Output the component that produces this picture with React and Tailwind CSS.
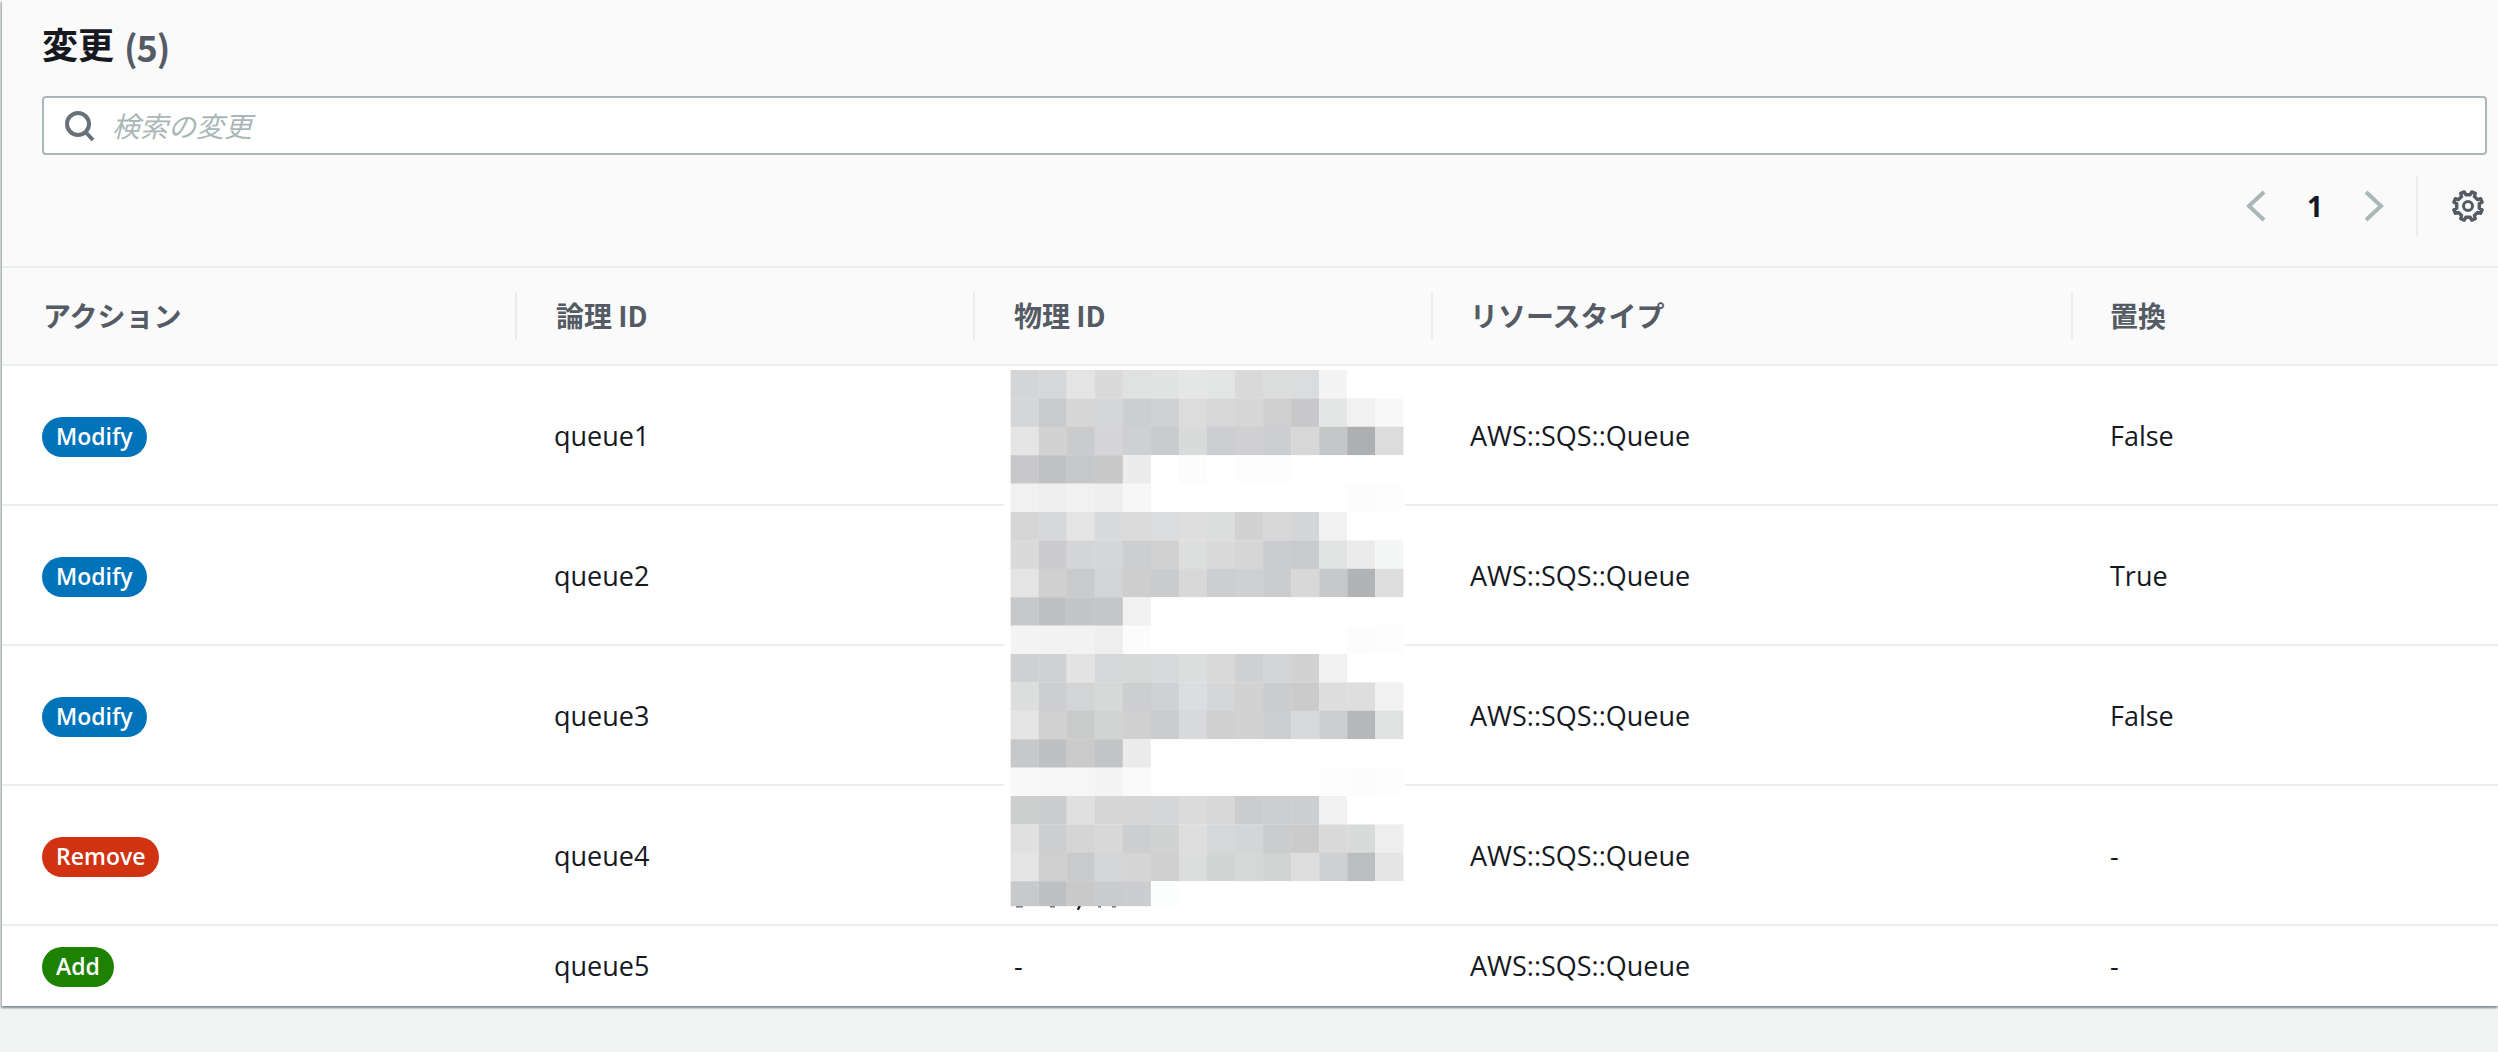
const GRID = 'grid grid-cols-[513px_458px_458px_640px_1fr]';

const changes = [
    { action: 'Modify', badge: 'bg-[#0073bb]', id: 'queue1', replace: 'False' },
    { action: 'Modify', badge: 'bg-[#0073bb]', id: 'queue2', replace: 'True' },
    { action: 'Modify', badge: 'bg-[#0073bb]', id: 'queue3', replace: 'False' },
    { action: 'Remove', badge: 'bg-[#d13212]', id: 'queue4', replace: '-' },
    { action: 'Add', badge: 'bg-[#1d8102]', id: 'queue5', physical: '-', replace: '-', last: true },
];

// blurred physical IDs, one row of squares per line
const mosaic = [
    'd4d5d7 d6d7d9 e4e4e4 dadada e0e2e1 e1e2e2 e5e7e6 e2e5e4 d9d9d9 dcdedd dbdcde f4f4f4 ffffff ffffff',
    'd5d6d8 c9cacc d6d6d6 d5d6d8 cdced0 d0d1d3 dcdcdc d8d8d8 d6d6d6 cfcfcf c8c8ca e4e6e5 f1f1f1 f8f8f8',
    'e5e5e5 d2d2d2 cacbcd d5d5d7 cfd0d2 cacbcd d9dbda cdced2 d0d0d2 cdced2 d7d7d7 c5c6c8 aeafb1 dcdcdc',
    'c8c8ca c0c1c3 c6c7c9 c8c8c8 ececec ffffff fcfcfc ffffff fdfdfd fdfdfd ffffff ffffff ffffff ffffff',
    'f1f1f1 eeeeee f1f1f1 eeeeee f7f7f7 ffffff ffffff ffffff ffffff ffffff ffffff fefefe fcfcfc fdfdfd',
    'd6d6d6 d6d7d9 e4e4e4 d9dadc dbdbdb dbdcde dedede dcdedd d2d2d2 d7d7d7 d4d5d7 f2f2f2 ffffff fefefe',
    'dadada cbcbcd d4d5d7 d5d6d8 cdced0 d1d1d1 dddfde d9d9d9 d6d6d6 cbcccf c9cacc e2e4e3 ebebeb f4f6f5',
    'e4e4e4 d0d0d0 c9cacc d3d4d6 cecece cacbcd d8d8d8 cdced0 cfd0d2 cbccce d8d8d8 c7c8ca b2b3b5 dedede',
    'c7c8ca bfc0c2 c4c5c7 c5c6c8 f1f1f1 ffffff ffffff ffffff ffffff ffffff ffffff ffffff ffffff ffffff',
    'f4f4f4 f2f2f2 f2f2f2 eeeeee fcfcfc ffffff ffffff ffffff ffffff ffffff ffffff fefefe fcfcfc fdfdfd',
    'cfd0d2 d0d1d3 e3e3e3 d6d7d9 d7d9d8 d8d9db dcdedd d9d9d9 cfd0d2 d3d4d6 d2d2d2 f1f1f1 ffffff ffffff',
    'dcdedd cdced0 d3d4d6 d7d9d8 cdced0 d0d1d3 dcdde0 d5d6d8 d2d2d2 cbccce cbcbcb dddddd dedede f1f1f1',
    'e5e5e5 d1d1d1 c9cbca d2d4d3 d0d0d0 cbccce d8d9db d0d0d0 d2d2d2 cdced0 d8d9db ccced0 b6b7b9 e0e2e1',
    'c7c8ca bfc0c2 cacaca c3c4c6 ebebeb ffffff fefefe ffffff ffffff ffffff ffffff ffffff ffffff ffffff',
    'f8f8f8 f6f6f6 f6f6f6 f4f4f4 fafafa ffffff ffffff ffffff ffffff ffffff ffffff fdfdfd fcfcfc fdfdfd',
    'cdcfce cbccce e0e0e0 d6d6d6 d6d6d6 d5d6d8 dbdbdb d8d8d8 cbccce cdced0 cdced0 f1f1f1 ffffff ffffff',
    'e0e0e0 cdced0 d5d5d5 d8d8d8 ccced0 d1d3d2 dedede d6d7d9 d4d5d7 cbccce cbcbcb d9d9d9 d9dbda eeeeee',
    'e5e5e5 cfcfcf c9cacc d5d6d8 d5d5d5 d0d0d0 dcdedd d2d4d3 d6d8d7 d2d4d3 dedede cfd0d2 bcbdbf e4e4e4',
    'c8c9cb bfc0c2 c9c9c9 cacbcd cccdcf fcfefd ffffff ffffff ffffff ffffff ffffff ffffff ffffff ffffff',
];

function Mosaic() {
    return (
        <svg
            className="absolute left-[1002px] top-[3px]"
            width="401"
            height="546"
            viewBox="1004 369 401 546"
        >
            <rect x="1004" y="369" width="401" height="546" fill="#fff" />
            <g fill="#6b6f75">
                <rect x="1016" y="906" width="7" height="1.5" />
                <rect x="1050" y="906" width="5" height="1.5" />
                <rect x="1098" y="906" width="3" height="1.5" />
                <rect x="1112" y="906" width="4" height="1.5" />
            </g>
            <path d="M1078 906 h3 l-2 4 h-2 z" fill="#16191f" />
            {mosaic.map((line, r) =>
                line.split(' ').map((color, c) => (
                    <rect
                        key={`${r}-${c}`}
                        x={1010.6 + c * 28.05}
                        y={370 + r * 28.4}
                        width="28.2"
                        height={r === 18 ? 25 : 28.6}
                        fill={`#${color}`}
                    />
                ))
            )}
        </svg>
    );
}

// eight-toothed cog outline
const cogPoints = Array.from({ length: 8 }, (_, i) => {
    const a = (i * Math.PI) / 4 + Math.PI / 8;
    const corners = [[-0.2, 11.5], [-0.13, 14.6], [0.13, 14.6], [0.2, 11.5]];
    return corners
        .map(([da, r]) => `${(17 + r * Math.cos(a + da)).toFixed(2)},${(17 + r * Math.sin(a + da)).toFixed(2)}`)
        .join(' ');
}).join(' ');

function Cog() {
    return (
        <svg width="34" height="34" viewBox="0 0 34 34" fill="none" stroke="#545b64">
            <polygon points={cogPoints} strokeWidth="3.4" strokeLinejoin="round" />
            <circle cx="17" cy="17" r="4.5" strokeWidth="3" />
        </svg>
    );
}

export default function App() {
    return (
        <div className="h-[1052px] w-full overflow-hidden bg-[#f2f3f3] font-['Open_Sans','Noto_Sans_CJK_JP',sans-serif] text-[#16191f]">
            <div className="ml-[2px] bg-white shadow-[0_2px_2px_0_rgba(0,28,36,0.35),-2px_2px_2px_0_rgba(0,28,36,0.2)]">
                <div className="h-[266px] bg-[#fafafa] pl-[40px] pr-[11px]">
                    <h2 className="flex h-[96px] items-start pt-[21px] text-[36px] leading-[50px] font-bold">
                        <span>変更</span>
                        <span className="ml-[10px] tracking-[-1px] text-[#545b64] font-['Noto_Sans_CJK_JP',sans-serif]">(5)</span>
                    </h2>
                    <div className="flex h-[59px] items-center rounded-[4px] border-2 border-[#aab7b8] bg-white pl-[20px]">
                        <svg width="32" height="32" viewBox="0 0 32 32" fill="none" stroke="#687078" strokeWidth="4">
                            <circle cx="14" cy="14" r="11" />
                            <path d="M21.5 22 L29 30" />
                        </svg>
                        <span className="ml-[16px] text-[28px] italic text-[#aab7b8]">検索の変更</span>
                    </div>
                    <div className="mt-[21px] flex h-[60px] items-center justify-end">
                        <svg width="20" height="32" viewBox="0 0 20 32" fill="none" stroke="#aab7b8" strokeWidth="4">
                            <path d="M18 2 L3 16 L18 30" />
                        </svg>
                        <span className="ml-[41px] mr-[41px] text-[28px] font-bold leading-none">1</span>
                        <svg width="20" height="32" viewBox="0 0 20 32" fill="none" stroke="#aab7b8" strokeWidth="4">
                            <path d="M2 2 L17 16 L2 30" />
                        </svg>
                        <div className="ml-[32px] h-[60px] border-l-2 border-[#eaeded]" />
                        <div className="ml-[33px] mr-[2px]">
                            <Cog />
                        </div>
                    </div>
                </div>

                <div className={`${GRID} h-[100px] items-center border-y-2 border-[#eaeded] bg-[#fafafa] text-[28px] font-bold text-[#545b64] font-['Noto_Sans_CJK_JP',sans-serif]`}>
                    <div className="-mt-[2px] pl-[41px]">アクション</div>
                    <div className="flex h-[48px] items-center border-l-2 border-[#eaeded] pl-[39px] pb-[2px]">論理 ID</div>
                    <div className="flex h-[48px] items-center border-l-2 border-[#eaeded] pl-[39px] pb-[2px]">物理 ID</div>
                    <div className="flex h-[48px] items-center border-l-2 border-[#eaeded] pl-[37px] pb-[2px]">リソースタイプ</div>
                    <div className="flex h-[48px] items-center border-l-2 border-[#eaeded] pl-[37px] pb-[2px]">置換</div>
                </div>

                <div className="relative">
                    {changes.map((row) => (
                        <div
                            key={row.id}
                            className={`${GRID} items-center text-[27px] ${row.last ? 'h-[80px]' : 'h-[140px] border-b-2 border-[#eaeded] pt-[2px]'}`}
                        >
                            <div className="pl-[40px]">
                                <span className={`inline-block h-[40px] rounded-[20px] px-[14px] text-[23px] leading-[39px] font-semibold text-white ${row.badge}`}>
                                    {row.action}
                                </span>
                            </div>
                            <div className="pl-[39px]">{row.id}</div>
                            <div className="pl-[41px]">{row.physical}</div>
                            <div className="pl-[39px]">AWS::SQS::Queue</div>
                            <div className="pl-[39px]">{row.replace}</div>
                        </div>
                    ))}
                    <Mosaic />
                </div>
            </div>
        </div>
    );
}
